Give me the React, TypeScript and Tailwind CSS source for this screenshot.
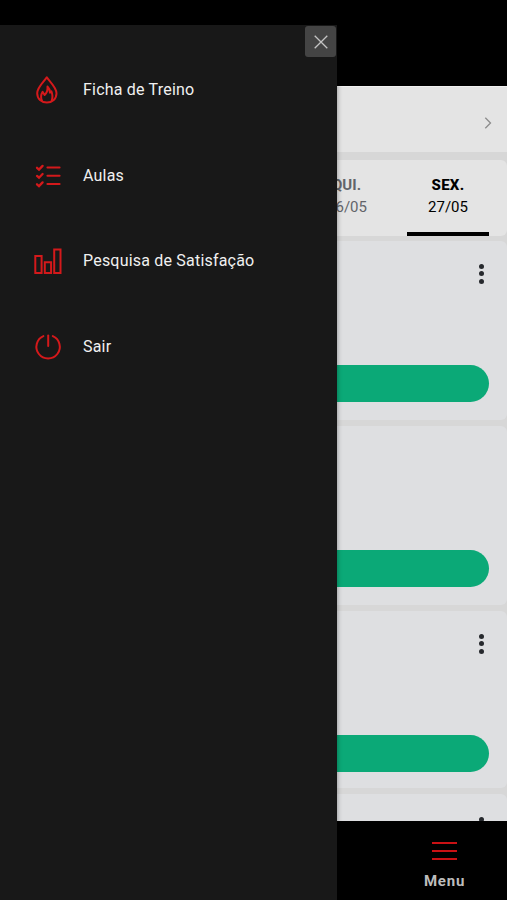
import type { ReactNode } from 'react';

const ICON_PROPS = {
  fill: 'none',
  stroke: '#d4191b',
  strokeWidth: 2,
  className: 'block h-8 w-8 shrink-0',
  viewBox: '0 0 32 32',
} as const;

function FlameIcon() {
  return (
    <svg {...ICON_PROPS} strokeLinejoin="round" strokeLinecap="round">
      <path d="M14.8 3.3C12.4 7.3 5.2 13.1 5.2 19.2c0 5.8 4.3 9.4 9.7 9.4s9.6-3.6 9.6-9.4C24.5 13.1 17.3 7.3 14.8 3.3Z" />
      <path d="M9.9 26.6c-1.5-3.4-.8-6.3.7-8.8l2 3.2c2.4-2.3 3.2-5 2.9-8.4 1.7 1.5 2.4 3.5 2.5 6.1l1.3-1.5c1.3 3.2 1.6 6.3.4 9.3" />
    </svg>
  );
}

function ChecklistIcon() {
  return (
    <svg {...ICON_PROPS} strokeLinecap="round">
      <path d="M15.4 7.4h12.2M15.4 15.7h12.2M15.4 23.9h12.2" />
      <path d="m5 7.8 2 1.8 3.6-3.7M5 15.9l2 1.8 3.6-3.7M5 24.3l2 1.8 3.6-3.7" strokeWidth="2.3" />
    </svg>
  );
}

function BarsIcon() {
  return (
    <svg {...ICON_PROPS}>
      <path d="M3.3 10.9h6.3v17H3.3ZM12.8 17.3h6.3v10.6h-6.3ZM22.2 4.5h6.3v23.4h-6.3Z" />
    </svg>
  );
}

function PowerIcon() {
  return (
    <svg {...ICON_PROPS} strokeLinecap="round">
      <path d="M16.2 4.4v10.6" />
      <path d="M11.4 5.1a11.7 11.7 0 1 0 9.4 0" />
    </svg>
  );
}

const MENU_ITEMS: { label: string; icon: ReactNode }[] = [
  { label: 'Ficha de Treino', icon: <FlameIcon /> },
  { label: 'Aulas', icon: <ChecklistIcon /> },
  { label: 'Pesquisa de Satisfação', icon: <BarsIcon /> },
  { label: 'Sair', icon: <PowerIcon /> },
];

const CLASSES = [
  { id: 1, height: 'h-[179px]', hasOptions: true },
  { id: 2, height: 'h-[179px]', hasOptions: false },
  { id: 3, height: 'h-[177px]', hasOptions: true },
  { id: 4, height: 'h-[180px]', hasOptions: true },
];

function OptionsDots() {
  return (
    <div className="mr-[23px] flex flex-col gap-[2.4px]">
      <span className="h-[5px] w-[5px] rounded-full bg-[#26292d]" />
      <span className="h-[5px] w-[5px] rounded-full bg-[#26292d]" />
      <span className="h-[5px] w-[5px] rounded-full bg-[#26292d]" />
    </div>
  );
}

function Drawer() {
  return (
    <aside className="z-10 w-[337px] shrink-0 bg-[#181818] shadow-[0_0_5px_rgba(0,0,0,0.4)]">
      <div className="flex justify-end pt-[1px] pr-[1px]">
        <button aria-label="Fechar" className="flex h-[31px] w-[31px] items-center justify-center rounded-[3px] bg-[#444]">
          <svg viewBox="0 0 14 14" className="h-[14px] w-[14px]" stroke="#c4c4c4" strokeWidth="1.3">
            <path d="m.7.7 12.6 12.6M13.3.7.7 13.3" />
          </svg>
        </button>
      </div>
      <nav className="mt-[17px] flex flex-col gap-[53.5px] pl-8">
        {MENU_ITEMS.map(({ label, icon }) => (
          <a key={label} className="flex h-8 items-center gap-[19px]">
            {icon}
            <span className="text-[16px] leading-8 tracking-[0.2px] whitespace-nowrap text-[#f0f0f0]">{label}</span>
          </a>
        ))}
      </nav>
    </aside>
  );
}

function DayTabs() {
  return (
    <div className="mt-2 flex h-[76px] shrink-0 justify-end gap-[18px] rounded-r-md bg-[#e4e4e4] pr-[18px] text-center text-[15px] leading-[22px]">
      <div className="w-[82px] shrink-0 pt-[14px] text-[#62646a]">
        <div className="-ml-[3px] font-bold">QUI.</div>
        <div className="-ml-[2px]">26/05</div>
      </div>
      <div className="flex w-[82px] shrink-0 flex-col border-b-4 border-black pt-[14px] text-black">
        <div className="font-extrabold tracking-[0.3px]">SEX.</div>
        <div>27/05</div>
      </div>
    </div>
  );
}

export default function App() {
  return (
    <div className="flex h-[900px] w-[507px] overflow-hidden bg-black pt-[25px] font-['Roboto',sans-serif]">
      <Drawer />
      <main className="flex min-w-0 flex-1 flex-col pt-[61px]">
        <div className="flex h-[735px] flex-col overflow-hidden bg-[#d7d7d7]">
          <div className="flex h-[66px] shrink-0 items-center justify-end border-t border-[#f1f1f1] bg-[#e4e4e4] pr-[15px] pt-[7px]">
            <svg viewBox="0 0 8 12" className="h-3 w-2" fill="none" stroke="#8c8c8c" strokeWidth="1.3">
              <path d="m1.3.8 5.2 5.2-5.2 5.2" />
            </svg>
          </div>
          <DayTabs />
          <div className="mt-[5px] flex flex-col gap-[6px]">
            {CLASSES.map(({ id, height, hasOptions }) => (
              <section key={id} className={`shrink-0 rounded-r-md bg-[#dedfe1] ${height}`}>
                <div className="flex h-[124px] items-start justify-end pt-[23px]">
                  {hasOptions && <OptionsDots />}
                </div>
                <div className="mr-[18px] h-[37px] rounded-r-full bg-[#0ba977]" />
              </section>
            ))}
          </div>
        </div>
        <footer className="flex flex-col items-end pt-[21px] pr-[41px]">
          <div className="flex w-[43px] flex-col items-center">
            <div className="flex flex-col gap-[6.2px]">
              <span className="h-[2px] w-[25px] bg-[#c91114]" />
              <span className="h-[2px] w-[25px] bg-[#c91114]" />
              <span className="h-[2px] w-[25px] bg-[#c91114]" />
            </div>
            <span className="mt-[11px] text-[15px] leading-5 font-bold tracking-[0.8px] text-[#bdbdbd]">Menu</span>
          </div>
        </footer>
      </main>
    </div>
  );
}
